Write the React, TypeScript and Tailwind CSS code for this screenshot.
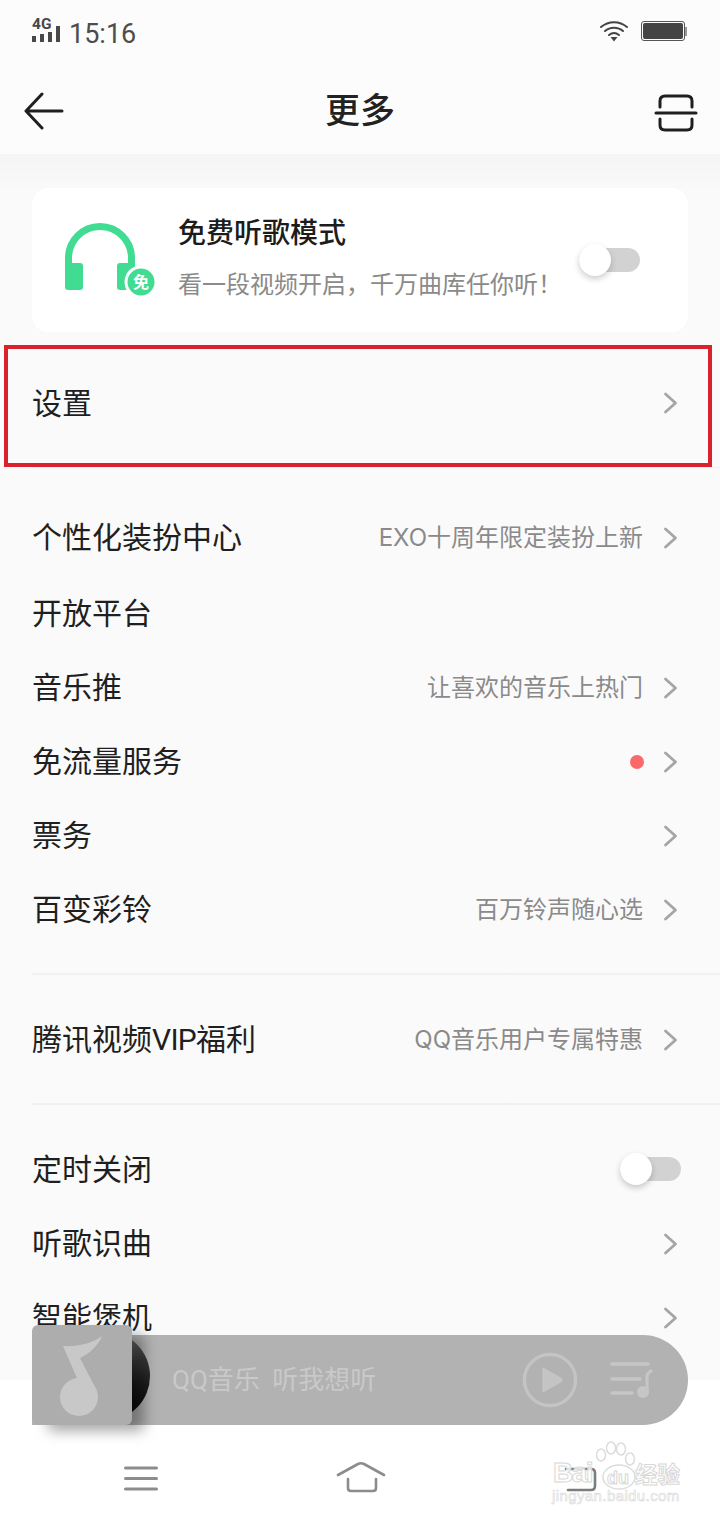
import React from "react";

const FONT = "font-['Roboto','Noto_Sans_CJK_SC',sans-serif]";

function Chevron() {
  return (
    <svg width="16" height="24" viewBox="0 0 16 24" fill="none" className="shrink-0">
      <path d="M2.5 3 L12.5 12 L2.5 21" stroke="#a5a5a5" strokeWidth="2.8" strokeLinecap="round" strokeLinejoin="round" />
    </svg>
  );
}

function Toggle() {
  return (
    <div className="relative w-[61px] h-[24px] rounded-full bg-[#d2d2d2]">
      <div className="absolute left-0 top-[-4px] w-[32px] h-[32px] rounded-full bg-white shadow-[0_3px_6px_rgba(0,0,0,0.2)]" />
    </div>
  );
}

function Row({ label, hint, dot, toggle, bare, h = "h-[74px]" }: { label: React.ReactNode; hint?: string; dot?: boolean; toggle?: boolean; bare?: boolean; h?: string }) {
  return (
    <div className={`flex items-center justify-between pl-[32px] pr-[41px] ${h}`}>
      <span className="text-[30px] leading-none text-[#1f1f1f]">{label}</span>
      {toggle ? (
        <div className="mr-[-2px] mt-[-2px]"><Toggle /></div>
      ) : bare ? null : (
        <div className="flex items-center gap-[20px]">
          {hint && <span className="text-[24px] leading-none text-[#8a8a8a] font-['Inter','Noto_Sans_CJK_SC',sans-serif]">{hint}</span>}
          {dot && <span className="w-[14px] h-[14px] rounded-full bg-[#fb6a6a] mr-[-1px]" />}
          <Chevron />
        </div>
      )}
    </div>
  );
}

function Divider() {
  return <div className="ml-[32px] h-[2px] bg-[#f1f1f1]" />;
}

export default function App() {
  return (
    <div className={`relative w-[720px] h-[1520px] overflow-hidden flex flex-col bg-white ${FONT}`}>
      {/* Status bar */}
      <div className="h-[70px] shrink-0 bg-[#fcfcfc] flex items-start justify-between pt-[18px] pl-[32px] pr-[33px]">
        <div className="flex items-start gap-[9px]">
          <div className="relative w-[28px] h-[23px] mt-[1px]">
            <span className="absolute left-0 top-[-3px] text-[15.5px] font-bold leading-[16px] text-[#484848]">4G</span>
            <div className="absolute left-0 right-0 bottom-0 flex items-end justify-between">
              <i className="block w-[4px] h-[6px] bg-[#484848]" />
              <i className="block w-[4px] h-[8px] bg-[#484848]" />
              <i className="block w-[4px] h-[10px] bg-[#484848]" />
              <i className="block w-[4px] h-[16px] bg-[#484848]" />
            </div>
          </div>
          <span className="text-[27px] leading-[32px] text-[#4d4d4d]">15:16</span>
        </div>
        <div className="flex items-center gap-[12px] pt-[2px]">
          <svg width="30" height="22" viewBox="0 0 30 22" fill="none">
            <path d="M2 7 C9.5 0.5 20.5 0.5 28 7" stroke="#444" strokeWidth="2" strokeLinecap="round" />
            <path d="M6 11 C11 6.5 19 6.5 24 11" stroke="#444" strokeWidth="2" strokeLinecap="round" />
            <path d="M10 15 C13 12.5 17 12.5 20 15" stroke="#444" strokeWidth="2" strokeLinecap="round" />
            <path d="M11.5 17 H18.5 L15 21.5 Z" fill="#444" />
          </svg>
          <div className="flex items-center">
            <div className="w-[44px] h-[20px] rounded-[3px] border border-[#555] p-[1px]">
              <div className="w-full h-full rounded-[2px] bg-[#444]" />
            </div>
            <div className="w-[2px] h-[9px] bg-[#999]" />
          </div>
        </div>
      </div>

      {/* Header */}
      <div className="h-[84px] shrink-0 bg-[#fcfcfc] flex items-center justify-between pl-[24px] pr-[22px]">
        <svg width="40" height="38" viewBox="0 0 40 38" fill="none" className="mt-[-2px]">
          <path d="M18 2 L2 19 L18 36 M2 19 H38" stroke="#1f1f1f" strokeWidth="3" strokeLinecap="round" strokeLinejoin="round" />
        </svg>
        <span className="text-[35px] leading-none text-[#222] font-medium mt-[-2px] ml-[2px]">更多</span>
        <svg width="44" height="38" viewBox="0 0 44 38" fill="none" className="mt-[2px]">
          <path d="M6 13 V7 Q6 2 11 2 H33 Q38 2 38 7 V13" stroke="#1f1f1f" strokeWidth="3" strokeLinecap="round" />
          <path d="M6 25 V31 Q6 36 11 36 H33 Q38 36 38 31 V25" stroke="#1f1f1f" strokeWidth="3" strokeLinecap="round" />
          <path d="M2 19 H42" stroke="#1f1f1f" strokeWidth="3" strokeLinecap="round" />
        </svg>
      </div>

      {/* Scrolling content */}
      <div className="h-[1226px] shrink-0 overflow-hidden bg-gradient-to-b from-[#f5f5f5] to-[#fafafa] to-[40px]">
        <div className="mt-[34px] mx-[32px] h-[144px] rounded-[16px] bg-white flex items-center pl-[32px] pr-[48px]">
          <svg width="92" height="80" viewBox="0 0 92 80" fill="none" className="shrink-0">
            <path d="M4.5 50 V38 A31.5 31.5 0 0 1 67.5 38 V58" stroke="#3fdc92" strokeWidth="7" fill="none" />
            <rect x="1" y="43" width="18" height="27" rx="3" fill="#3fdc92" />
            <rect x="53" y="43" width="18" height="27" rx="3" fill="#3fdc92" />
            <circle cx="77" cy="62" r="16.5" fill="#fff" />
            <circle cx="77" cy="62" r="13.5" fill="#3fdc92" />
            <text x="77" y="68" textAnchor="middle" fontSize="16" fontWeight="700" fill="#fff">免</text>
          </svg>
          <div className="ml-[22px] flex-1 flex flex-col gap-[20px] mt-[-2px]">
            <span className="text-[28px] leading-[32px] font-medium text-[#1c1c1c]">免费听歌模式</span>
            <span className="text-[24px] leading-[30px] text-[#8a8a8a] whitespace-nowrap">看一段视频开启，千万曲库任你听！</span>
          </div>
          <Toggle />
        </div>

        <div className="mt-[13px] ml-[4px] mr-[8px] h-[122px] border-[4px] border-[#d9222c] flex items-center justify-between pl-[24px] pr-[29px]">
          <span className="text-[30px] leading-none text-[#1f1f1f] mt-[-4px]">设置</span>
          <div className="mt-[-6px]"><Chevron /></div>
        </div>
        <div className="h-[1px] bg-[#f1f1f1] ml-[32px]" />

        <div className="pt-[30px]">
          <Row label="个性化装扮中心" hint="EXO十周年限定装扮上新" h="h-[79px]" />
          <Row label="开放平台" bare />
          <Row label="音乐推" hint="让喜欢的音乐上热门" />
          <Row label="免流量服务" dot />
          <Row label="票务" />
          <Row label="百变彩铃" hint="百万铃声随心选" />
        </div>
        <div className="mt-[26px]"><Divider /></div>
        <div className="pt-[28px] pb-[26px]">
          <Row label={<>腾讯视频<span className="tracking-[-0.7px]">VIP</span>福利</>} hint="QQ音乐用户专属特惠" />
        </div>
        <Divider />
        <div className="pt-[28px]">
          <Row label="定时关闭" toggle />
          <Row label="听歌识曲" />
          <Row label="智能煲机" />
        </div>
      </div>

      {/* Bottom nav */}
      <div className="flex-1 bg-white flex items-start justify-between pl-[124px] pr-[123px] pt-[81px]">
        <svg width="34" height="28" viewBox="0 0 34 28" fill="none" className="mt-[4px]">
          <path d="M1.5 3 H32.5 M1.5 13.5 H32.5 M1.5 24 H32.5" stroke="#8c8c8c" strokeWidth="3" strokeLinecap="round" />
        </svg>
        <svg width="50" height="32" viewBox="0 0 50 32" fill="none">
          <path d="M2 14 L22 3 Q25 1.5 28 3 L48 14" stroke="#8c8c8c" strokeWidth="2.6" strokeLinecap="round" strokeLinejoin="round" />
          <path d="M12 18 V27 Q12 30 15 30 H37 Q40 30 40 27 V18" stroke="#8c8c8c" strokeWidth="2.6" strokeLinecap="round" />
        </svg>
        <svg width="34" height="28" viewBox="0 0 34 28" fill="none" className="mt-[4px]">
          <path d="M3 4 H28 Q32 4 32 8 V21 Q32 25 28 25 H5" stroke="#7c7c7c" strokeWidth="2.6" strokeLinecap="round" />
        </svg>
      </div>

      {/* Mini player overlay */}
      <div className="absolute left-[32px] top-[1335px] w-[656px] h-[90px] rounded-r-[45px] bg-[#b2b2b2] flex items-center pl-[140px] pr-[34px]">
        <span className="text-[26px] leading-none text-[#c9c9c9] flex-1 [word-spacing:6px]">QQ音乐 听我想听</span>
        <svg width="56" height="56" viewBox="0 0 58 58" fill="none" className="mr-[32px]">
          <circle cx="29" cy="29" r="26.5" stroke="#c4c4c4" strokeWidth="3.5" />
          <path d="M21 17.5 Q21 15.5 23 16.5 L41 27 Q43 29 41 31 L23 41.5 Q21 42.5 21 40.5 Z" fill="#c4c4c4" />
        </svg>
        <svg width="44" height="38" viewBox="0 0 44 38" fill="none">
          <path d="M2 3 H38 M2 18 H30 M2 32 H22" stroke="#c6c6c6" strokeWidth="3.5" strokeLinecap="round" />
          <circle cx="33" cy="31" r="6" fill="#c6c6c6" />
          <path d="M37 31 V16 Q37 12 41 10" stroke="#c6c6c6" strokeWidth="3.2" strokeLinecap="round" />
        </svg>
      </div>
      <div className="absolute left-[60px] top-[1331px] w-[90px] h-[90px] rounded-full bg-[conic-gradient(#3a3a3a_0deg,#6a6a6a_35deg,#3a3a3a_65deg,#1e1e1e_100deg,#0c0c0c_135deg,#1a1a1a_360deg)]" />
      <div className="absolute left-[32px] top-[1325px] w-[100px] h-[100px] rounded-[6px] bg-[#adadad] shadow-[14px_8px_14px_-2px_rgba(0,0,0,0.35)] flex items-center justify-center">
        <svg width="44" height="82" viewBox="0 0 44 82" fill="none" className="mt-[2px]">
          <path d="M3 11 C18 12 33 8 42 1 C38 11 29 19 20 23 L37 56 L20 50 Z" fill="#c8c8c8" />
          <circle cx="19" cy="62" r="19" fill="#c8c8c8" />
        </svg>
      </div>

      {/* Watermark */}
      <div className="absolute left-[552px] top-[1441px] w-[130px] h-[62px] font-['Liberation_Sans',sans-serif] pointer-events-none">
        <svg width="50" height="50" viewBox="0 0 50 50" fill="none" className="absolute left-[38px] top-0">
          <g stroke="#dcdcdc" strokeWidth="1.5" fill="#ffffff" fillOpacity="0.8">
            <ellipse cx="11" cy="14" rx="4.5" ry="6" />
            <ellipse cx="21" cy="7" rx="4.5" ry="6" />
            <ellipse cx="31" cy="8" rx="4.5" ry="6" />
            <ellipse cx="40" cy="18" rx="4.5" ry="6" />
            <ellipse cx="29" cy="36" rx="16" ry="12" />
          </g>
        </svg>
        <span className="absolute left-[1px] top-[18px] text-[28px] tracking-[-1.5px] font-bold leading-none text-[#ffffffcc] [-webkit-text-stroke:1px_#d8d8d8]">Bai</span>
        <span className="absolute left-[55px] top-[28px] text-[18px] font-bold leading-none text-[#ffffffcc] [-webkit-text-stroke:1px_#d8d8d8]">du</span>
        <span className="absolute left-[83px] top-[21px] text-[22.5px] font-bold leading-none text-[#ffffffcc] whitespace-nowrap font-['Noto_Sans_CJK_SC'] [-webkit-text-stroke:1px_#d8d8d8]">经验</span>
        <span className="absolute left-0 top-[47px] text-[15px] leading-none tracking-[0.4px] text-[#ffffffcc] whitespace-nowrap [-webkit-text-stroke:0.6px_#d8d8d8]">jingyan.baidu.com</span>
      </div>
    </div>
  );
}
